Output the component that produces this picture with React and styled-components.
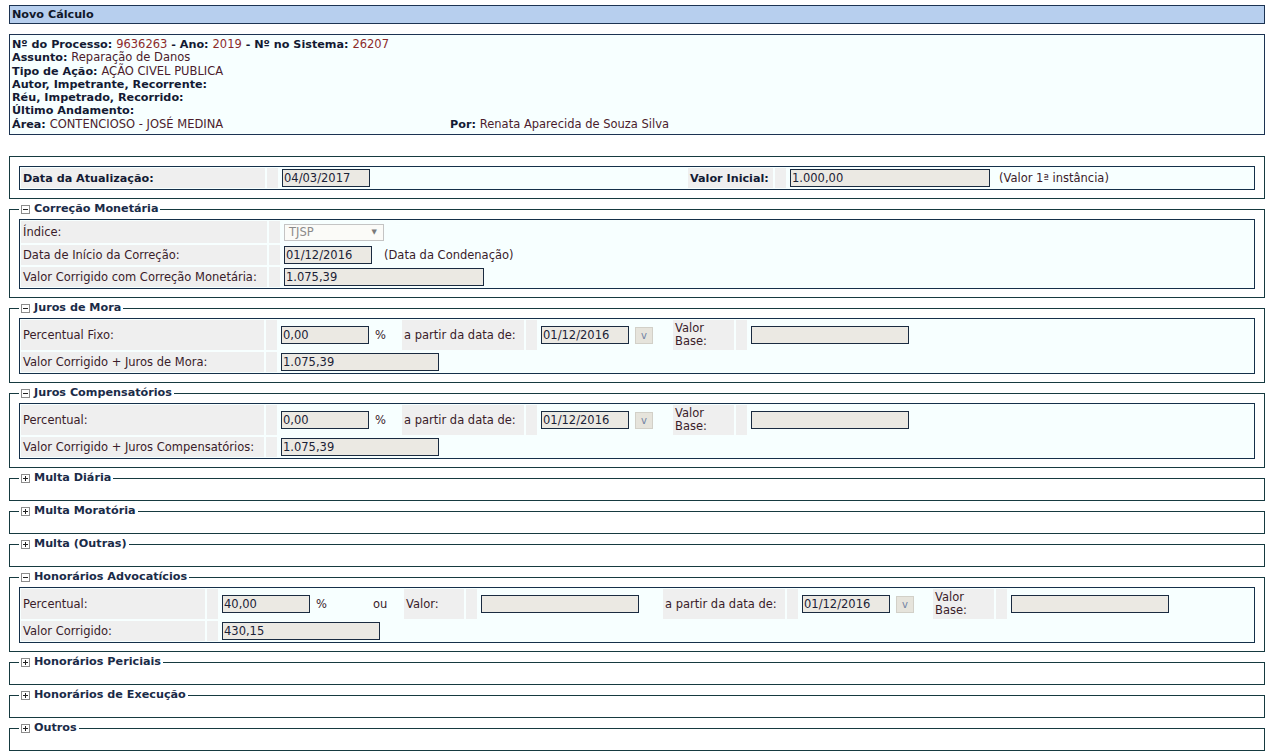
import React from "react";
import styled, { createGlobalStyle } from "styled-components";

const GlobalStyle = createGlobalStyle`
  html, body {
    margin: 0;
    padding: 0;
    background: #fff;
  }
  body {
    font-family: "DejaVu Sans", Verdana, sans-serif;
    font-size: 11.5px;
    color: #3a1c2a;
  }
`;

const Page = styled.div`
  width: 1256px;
  padding: 5px 0 0 9px;
`;

const TitleBar = styled.div`
  height: 17px;
  line-height: 17px;
  padding: 0 2px;
  border: 1px solid #1c3352;
  background: #b7cfee;
  font-size: 11.2px;
  font-weight: bold;
  color: #10182a;
`;

const InfoBox = styled.div`
  margin-top: 10px;
  padding: 3px 2px 3px;
  border: 1px solid #1c3352;
  background: #f7ffff;
  line-height: 13.3px;
`;

const InfoLine = styled.div`
  display: flex;
  white-space: pre;
`;

const InfoCol = styled.div`
  width: ${(p) => p.$w}px;
  white-space: pre;
`;

const Key = styled.b`
  font-size: 11.2px;
  color: #131a33;
`;

const Val = styled.span`
  color: ${(p) => (p.$num ? "#8c2b2b" : "#4b1c2c")};
`;

const Box = styled.fieldset`
  margin: ${(p) => (p.$first ? "21px 0 3px" : "0 0 3px")};
  padding: ${(p) => (p.$first ? "9px 9px 8px" : "3px 9px 8px")};
  border: 1px solid #163a40;
  min-width: 0;
`;

const Legend = styled.legend`
  display: flex;
  align-items: center;
  gap: 4px;
  height: 14px;
  padding: 0 2px;
  line-height: 14px;
  font-size: 11.2px;
  font-weight: bold;
  color: #1a2b48;
`;

const Collapsed = styled.div`
  height: 4px;
`;

const Grid = styled.div`
  display: grid;
  grid-template-columns: ${(p) => p.$cols};
  gap: 2px;
  padding: 1px;
  border: 1px solid #15304a;
  background: #f7ffff;
`;

const Label = styled.div`
  display: flex;
  align-items: center;
  min-height: 20px;
  padding: ${(p) => (p.$tall ? "2px" : "0 2px")};
  background: #efefef;
  line-height: 13px;
  white-space: nowrap;
  font-size: ${(p) => (p.$bold ? "11.2px" : "inherit")};
  font-weight: ${(p) => (p.$bold ? "bold" : "normal")};
  color: ${(p) => (p.$bold ? "#131a33" : "#3a1c2a")};
`;

const Spacer = styled.div`
  background: #efefef;
`;

const Field = styled.div`
  display: flex;
  align-items: center;
  gap: 6px;
  min-height: ${(p) => p.$h || 20}px;
  padding: 0 2px;
  white-space: nowrap;
  grid-column: ${(p) => (p.$wide ? "3 / -1" : "auto")};
`;

const Input = styled.input`
  box-sizing: border-box;
  width: ${(p) => p.$w}px;
  height: 18px;
  margin: 0;
  padding: 0 1px;
  border: 1px solid #1a2b40;
  border-radius: 0;
  background: #ebe9e3;
  font: 11.5px "DejaVu Sans", Verdana, sans-serif;
  color: #1b2236;
  outline: none;
`;

const FakeSelect = styled.div`
  box-sizing: border-box;
  display: flex;
  align-items: center;
  justify-content: space-between;
  width: 100px;
  height: 17px;
  padding: 0 6px 0 4px;
  border: 1px solid #c4c4c4;
  background: #fbfbf8;
  color: #8a8a8a;
`;

const Arrow = styled.span`
  font-size: 7px;
  color: #7a7a7a;
`;

const DateButton = styled.button`
  box-sizing: border-box;
  width: 18px;
  height: 17px;
  margin: 0;
  padding: 0;
  border: 1px solid #d2d0c8;
  background: #e6e4dc;
  font: 10px "DejaVu Sans", Verdana, sans-serif;
  color: #7384a4;
`;

const Note = styled.span`
  margin-left: ${(p) => p.$ml || 0}px;
`;

function Toggle({ open }) {
  return (
    <svg width="9" height="9" viewBox="0 0 9 9">
      <rect x="0.5" y="0.5" width="8" height="8" fill="#fff" stroke="#8c8c8c" />
      <line x1="2" y1="4.5" x2="7" y2="4.5" stroke="#222" />
      {!open && <line x1="4.5" y1="2" x2="4.5" y2="7" stroke="#222" />}
    </svg>
  );
}

function Section({ title, open, children }) {
  return (
    <Box>
      <Legend>
        <Toggle open={open} />
        {title}
      </Legend>
      {open ? children : <Collapsed />}
    </Box>
  );
}

function DateField({ value }) {
  return (
    <>
      <Input $w={88} value={value} readOnly />
      <DateButton type="button">v</DateButton>
    </>
  );
}

const juros = "243px 11px 121px 122px 11px 132px 61px 11px 1fr";
const honor = "184px 11px 182px 60px 11px 182px 122px 11px 131px 61px 11px 1fr";

function JurosTable({ first, second }) {
  return (
    <Grid $cols={juros}>
      <Label>{first}</Label>
      <Spacer />
      <Field>
        <Input $w={88} value="0,00" readOnly />
        <span>%</span>
      </Field>
      <Label>a partir da data de:</Label>
      <Spacer />
      <Field>
        <DateField value="01/12/2016" />
      </Field>
      <Label $tall>
        Valor
        <br />
        Base:
      </Label>
      <Spacer />
      <Field>
        <Input $w={158} value="" readOnly />
      </Field>
      <Label>{second}</Label>
      <Spacer />
      <Field $wide>
        <Input $w={158} value="1.075,39" readOnly />
      </Field>
    </Grid>
  );
}

export default function App() {
  return (
    <>
      <GlobalStyle />
      <Page>
        <TitleBar>Novo Cálculo</TitleBar>

        <InfoBox>
          <InfoLine>
            <Key>Nº do Processo: </Key>
            <Val $num>9636263</Val>
            <Key> - Ano: </Key>
            <Val $num>2019</Val>
            <Key> - Nº no Sistema: </Key>
            <Val $num>26207</Val>
          </InfoLine>
          <InfoLine>
            <Key>Assunto: </Key>
            <Val>Reparação de Danos</Val>
          </InfoLine>
          <InfoLine>
            <Key>Tipo de Ação: </Key>
            <Val>AÇÃO CIVEL PUBLICA</Val>
          </InfoLine>
          <InfoLine>
            <Key>Autor, Impetrante, Recorrente:</Key>
          </InfoLine>
          <InfoLine>
            <Key>Réu, Impetrado, Recorrido:</Key>
          </InfoLine>
          <InfoLine>
            <Key>Último Andamento:</Key>
          </InfoLine>
          <InfoLine>
            <InfoCol $w={438}>
              <Key>Área: </Key>
              <Val>CONTENCIOSO - JOSÉ MEDINA</Val>
            </InfoCol>
            <InfoCol>
              <Key>Por: </Key>
              <Val>Renata Aparecida de Souza Silva</Val>
            </InfoCol>
          </InfoLine>
        </InfoBox>

        <Box $first>
          <Grid $cols="244px 11px 406px 85px 11px 1fr">
            <Label $bold>Data da Atualização:</Label>
            <Spacer />
            <Field>
              <Input $w={88} value="04/03/2017" readOnly />
            </Field>
            <Label $bold>Valor Inicial:</Label>
            <Spacer />
            <Field>
              <Input $w={200} value="1.000,00" readOnly />
              <Note $ml={3}>(Valor 1ª instância)</Note>
            </Field>
          </Grid>
        </Box>

        <Section title="Correção Monetária" open>
          <Grid $cols="246px 11px 1fr">
            <Label>Índice:</Label>
            <Spacer />
            <Field $h={22}>
              <FakeSelect>
                <span>TJSP</span>
                <Arrow>▼</Arrow>
              </FakeSelect>
            </Field>
            <Label>Data de Início da Correção:</Label>
            <Spacer />
            <Field>
              <Input $w={88} value="01/12/2016" readOnly />
              <Note $ml={6}>(Data da Condenação)</Note>
            </Field>
            <Label>Valor Corrigido com Correção Monetária:</Label>
            <Spacer />
            <Field>
              <Input $w={200} value="1.075,39" readOnly />
            </Field>
          </Grid>
        </Section>

        <Section title="Juros de Mora" open>
          <JurosTable first="Percentual Fixo:" second="Valor Corrigido + Juros de Mora:" />
        </Section>

        <Section title="Juros Compensatórios" open>
          <JurosTable first="Percentual:" second="Valor Corrigido + Juros Compensatórios:" />
        </Section>

        <Section title="Multa Diária" />
        <Section title="Multa Moratória" />
        <Section title="Multa (Outras)" />

        <Section title="Honorários Advocatícios" open>
          <Grid $cols={honor}>
            <Label>Percentual:</Label>
            <Spacer />
            <Field>
              <Input $w={88} value="40,00" readOnly />
              <span>%</span>
              <Note $ml={40}>ou</Note>
            </Field>
            <Label>Valor:</Label>
            <Spacer />
            <Field>
              <Input $w={158} value="" readOnly />
            </Field>
            <Label>a partir da data de:</Label>
            <Spacer />
            <Field>
              <DateField value="01/12/2016" />
            </Field>
            <Label $tall>
              Valor
              <br />
              Base:
            </Label>
            <Spacer />
            <Field>
              <Input $w={158} value="" readOnly />
            </Field>
            <Label>Valor Corrigido:</Label>
            <Spacer />
            <Field $wide>
              <Input $w={158} value="430,15" readOnly />
            </Field>
          </Grid>
        </Section>

        <Section title="Honorários Periciais" />
        <Section title="Honorários de Execução" />
        <Section title="Outros" />
      </Page>
    </>
  );
}
